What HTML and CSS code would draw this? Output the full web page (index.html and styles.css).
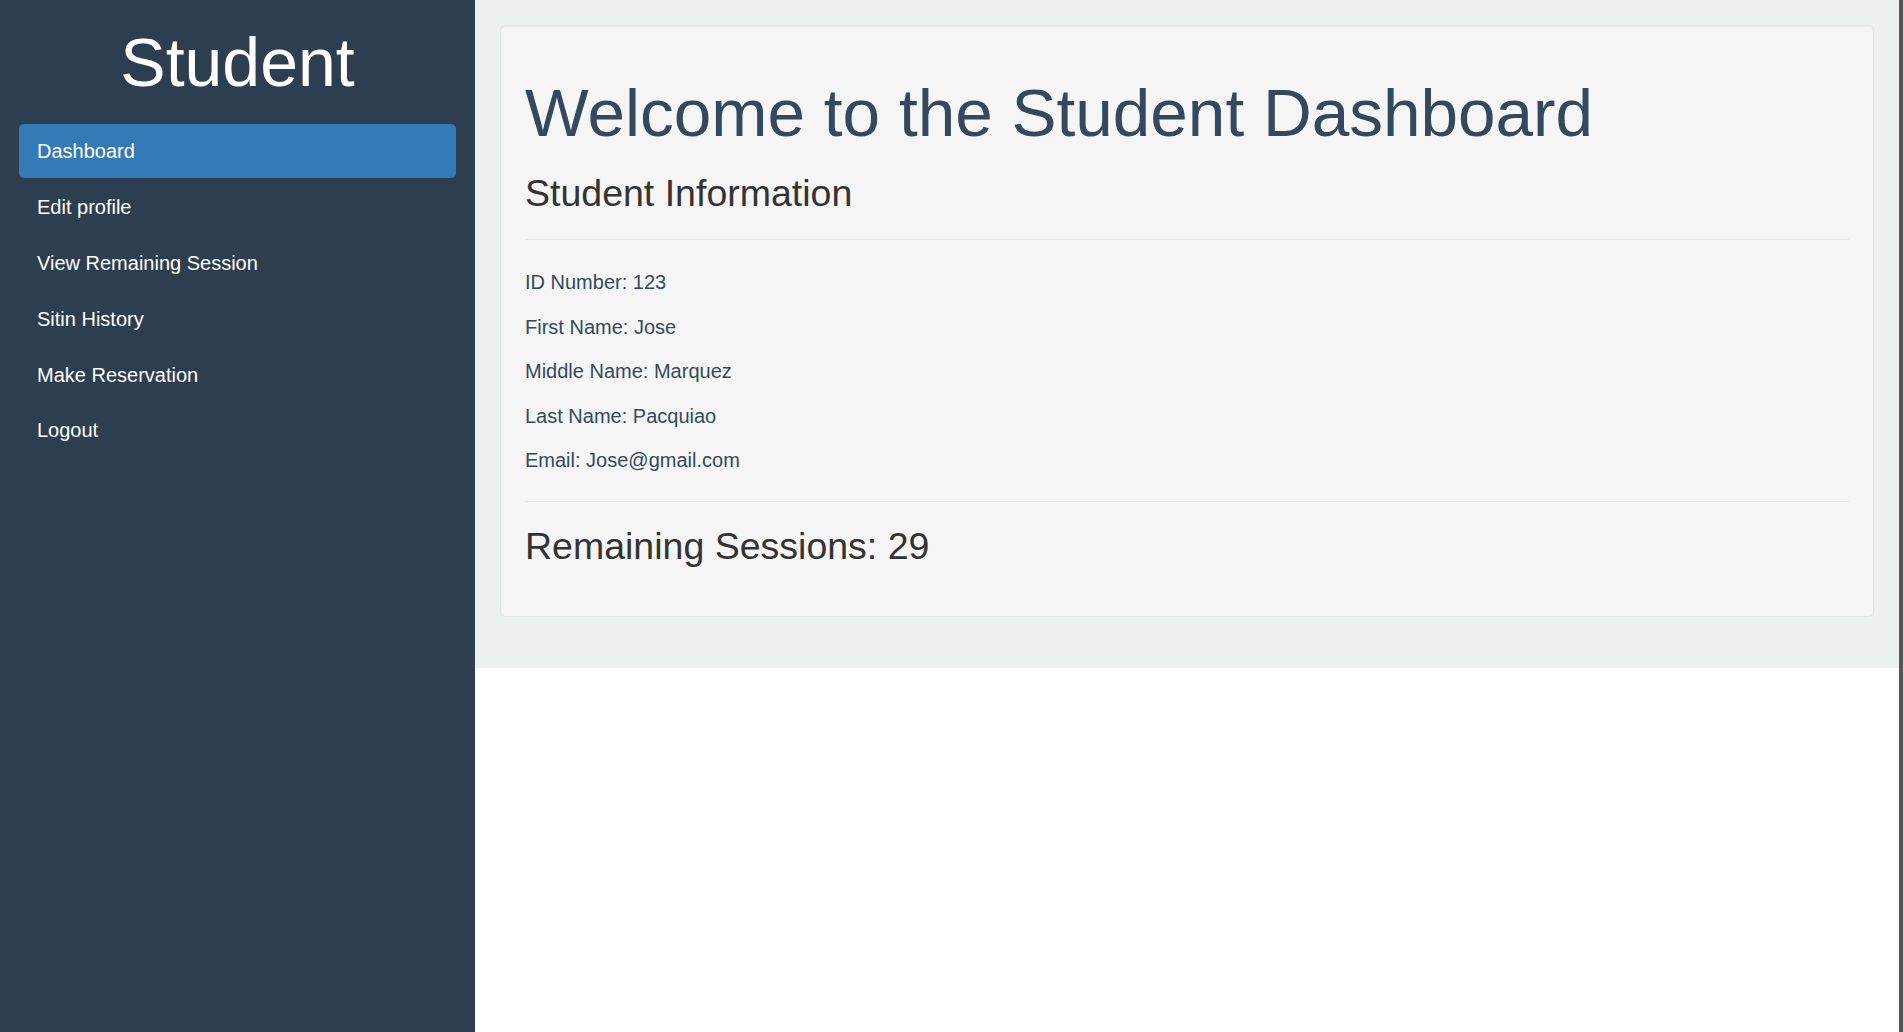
FILE: index.html
```html
<!DOCTYPE html>
<html lang="en">
<head>
<meta charset="utf-8">
<title>Student Dashboard</title>
<link rel="stylesheet" href="styles.css">
</head>
<body>
  <aside class="sidebar">
    <h1 class="brand">Student</h1>
    <ul class="nav">
      <li><a class="nav-link active" href="#">Dashboard</a></li>
      <li><a class="nav-link" href="#">Edit profile</a></li>
      <li><a class="nav-link" href="#">View Remaining Session</a></li>
      <li><a class="nav-link" href="#">Sitin History</a></li>
      <li><a class="nav-link" href="#">Make Reservation</a></li>
      <li><a class="nav-link" href="#">Logout</a></li>
    </ul>
  </aside>
  <div class="content">
    <main class="main">
      <section class="well">
        <h1 class="welcome">Welcome to the Student Dashboard</h1>
        <h2 class="section-title">Student Information</h2>
        <hr class="rule">
        <p class="info">ID Number: 123</p>
        <p class="info">First Name: Jose</p>
        <p class="info">Middle Name: Marquez</p>
        <p class="info">Last Name: Pacquiao</p>
        <p class="info">Email: Jose@gmail.com</p>
        <hr class="rule rule-end">
        <h2 class="section-title sessions">Remaining Sessions: 29</h2>
      </section>
    </main>
  </div>
</body>
</html>
```
FILE: styles.css
```css
* {
  box-sizing: border-box;
}

html, body {
  margin: 0;
  padding: 0;
}

body {
  display: flex;
  min-height: 100vh;
  font-family: "Liberation Sans", Arial, Helvetica, sans-serif;
  background: #ffffff;
  border-right: 4px solid #555555;
}

.sidebar {
  width: 475px;
  flex: 0 0 475px;
  background: #2c3e50;
  padding: 25px 19px 0;
}

.brand {
  margin: 0 0 24px;
  font-size: 68px;
  line-height: 75px;
  font-weight: normal;
  color: #ffffff;
  text-align: center;
}

.nav {
  list-style: none;
  margin: 0;
  padding: 0;
}

.nav li + li {
  margin-top: 1.9px;
}

.nav-link {
  display: block;
  padding: 13px 18px;
  font-size: 20px;
  line-height: 28px;
  color: #ffffff;
  text-decoration: none;
  border-radius: 5px;
}

.nav-link.active {
  background: #337ab7;
}

.content {
  flex: 1 1 auto;
  min-width: 0;
}

.main {
  background: #ecf0f1;
  padding: 25px 25px 51px;
}

.well {
  background: #f5f5f5;
  border: 1px solid #e3e3e3;
  border-radius: 5px;
  box-shadow: inset 0 1px 1px rgba(0, 0, 0, 0.05);
  padding: 24px 24px 24px;
}

.welcome {
  margin: 25px 0 0;
  font-size: 67.5px;
  line-height: 75px;
  font-weight: normal;
  color: #34495e;
}

.section-title {
  margin: 23px 0 0;
  font-size: 37.5px;
  line-height: 41px;
  font-weight: normal;
  color: #333333;
}

.section-title.sessions {
  margin: 0 0 25px;
}

.rule {
  border: 0;
  border-top: 1px solid #e6e6e6;
  margin: 25px 0 26px;
  height: 0;
}

.rule.rule-end {
  margin-bottom: 24px;
}

.info {
  margin: 0 0 12.5px;
  font-size: 20px;
  line-height: 32px;
  color: #34495e;
}
```
